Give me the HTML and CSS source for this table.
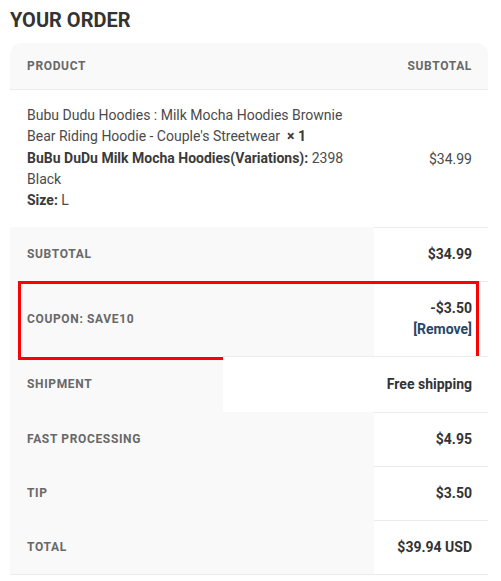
FILE: index.html
```html
<!DOCTYPE html>
<html lang="en">
<head>
<meta charset="utf-8">
<title>Your order</title>
<link rel="stylesheet" href="styles.css">
</head>
<body>
<div class="page">
  <h2 class="title">YOUR ORDER</h2>
  <div class="card">
    <div class="head">
      <span class="label">Product</span>
      <span class="label">Subtotal</span>
    </div>
    <div class="item">
      <div class="item-desc">
        <div>Bubu Dudu Hoodies : Milk Mocha Hoodies Brownie Bear Riding Hoodie - Couple's Streetwear&nbsp; <strong>×&nbsp;1</strong></div>
        <div><strong>BuBu DuDu Milk Mocha Hoodies(Variations):</strong> 2398 Black</div>
        <div><strong>Size:</strong> L</div>
      </div>
      <div class="item-price">$34.99</div>
    </div>
    <div class="row">
      <div class="cell-label label">Subtotal</div>
      <div class="cell-value">$34.99</div>
    </div>
    <div class="row coupon">
      <div class="cell-label label">Coupon: save10</div>
      <div class="cell-value">-$3.50<br><a class="remove" href="#">[Remove]</a></div>
      <div class="highlight"></div>
    </div>
    <div class="row wide">
      <div class="cell-label label">Shipment</div>
      <div class="cell-value">Free shipping</div>
    </div>
    <div class="row">
      <div class="cell-label label">Fast processing</div>
      <div class="cell-value">$4.95</div>
    </div>
    <div class="row">
      <div class="cell-label label">Tip</div>
      <div class="cell-value">$3.50</div>
    </div>
    <div class="row last">
      <div class="cell-label label">Total</div>
      <div class="cell-value">$39.94 USD</div>
    </div>
  </div>
</div>
</body>
</html>
```

FILE: styles.css
```css
* { box-sizing: border-box; }
html, body { margin: 0; padding: 0; background: #fff; }
body {
  font-family: Roboto, "Liberation Sans", Arial, sans-serif;
  color: #333;
}
.page {
  padding: 8px 13px 0 10px;
}
.title {
  margin: 0 0 11px;
  font-size: 20px;
  line-height: 24px;
  font-weight: 700;
  color: #333;
}
.card {
  background: #f9f9f9;
  border-radius: 12px 12px 0 0;
  overflow: hidden;
  border-bottom: 1px solid #ececec;
}
.label {
  text-transform: uppercase;
  font-size: 12px;
  font-weight: 700;
  letter-spacing: 0.65px;
  color: #686868;
}
.head {
  display: flex;
  justify-content: space-between;
  padding: 16px 16px;
  line-height: 14px;
  border-bottom: 1px solid #ececec;
}
.head .label { padding-left: 1px; }
.item {
  display: grid;
  grid-template-columns: 364px 114px;
  background: #fff;
}
.item-desc {
  padding: 15px 16px 16px 17px;
  font-size: 14px;
  line-height: 21.25px;
  color: #4a4a4a;
}
.item-desc strong { color: #3a3a3a; }
.item-price {
  align-self: center;
  text-align: right;
  padding-right: 16px;
  font-size: 14px;
  color: #4a4a4a;
}
.row {
  position: relative;
  display: grid;
  grid-template-columns: 364px 114px;
}
.row.wide { grid-template-columns: 213px 265px; }
.cell-label {
  display: flex;
  align-items: center;
  padding: 0 16px 0 17px;
}
.cell-value {
  background: #fff;
  border-top: 1px solid #ececec;
  padding: 16px 16px;
  text-align: right;
  font-size: 14px;
  line-height: 21px;
  font-weight: 700;
  color: #333;
}
.row.wide .cell-value { padding-top: 17px; padding-bottom: 17px; }
.remove {
  color: #274766;
  text-decoration: none;
  font-weight: 700;
}
.highlight {
  position: absolute;
  left: 8px;
  top: 0;
  width: 461px;
  height: 79px;
  border: 3px solid #ff0000;
  pointer-events: none;
}
```
